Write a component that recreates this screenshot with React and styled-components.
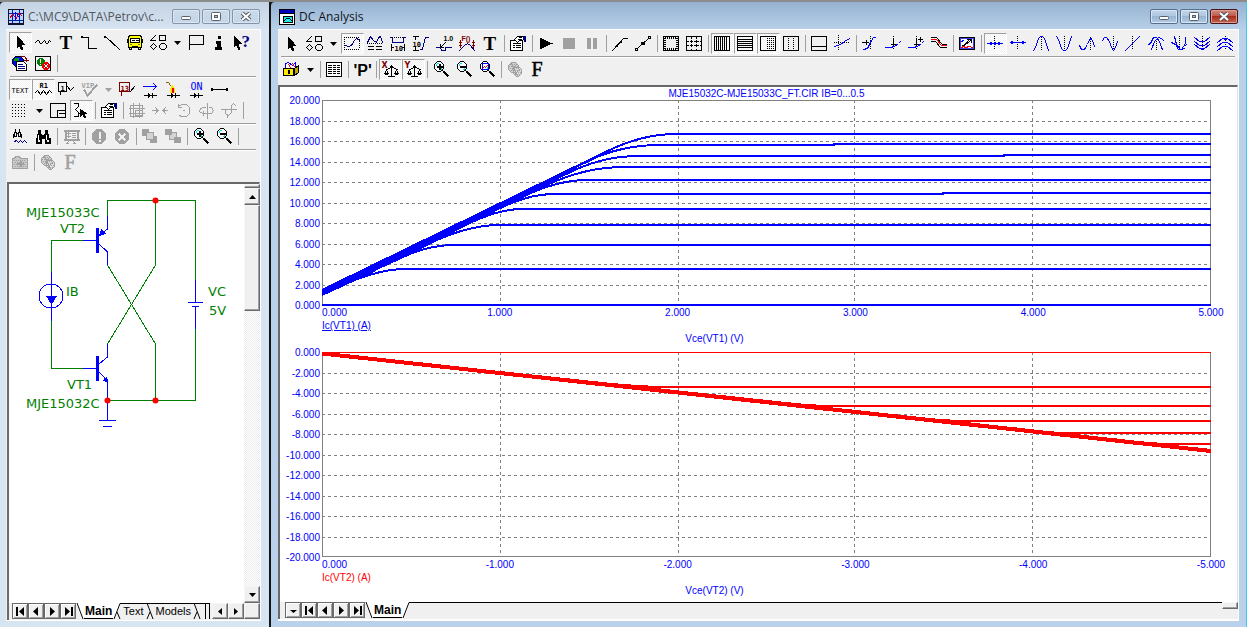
import React from "react"
import styled, { createGlobalStyle, css } from "styled-components"

const GlobalStyle = createGlobalStyle`
  * { box-sizing: border-box; }
  body {
    margin: 0;
    font-family: "Liberation Sans", Arial, sans-serif;
    background: #000;
  }
  button { font: inherit; padding: 0; margin: 0; }
`;

const Desktop = styled.div`
  display: grid;
  grid-template-columns: 269px 1fr;
  gap: 2px;
  min-height: 100vh;
  padding-top: 2px;
  background: linear-gradient(#8c8c8c 2px, #151515 2px);
`;

const Frame = styled.section`
  display: flex;
  flex-direction: column;
  min-width: 0;
  padding: ${p => (p.$active ? "0 7px 6px 7px" : "0 8px 6px 6px")};
  border-top-left-radius: 4px;
  background: ${p => (p.$active
    ? "linear-gradient(#96b2d0, #b9d1ea 28px)"
    : "linear-gradient(#c4d3e3, #d7e4f2 28px)")};
  border-right: ${p => (p.$active ? "1px solid #35cdf0" : "0")};
`;

const TitleBar = styled.header`
  display: flex;
  align-items: center;
  height: 27px;
  padding: 2px 1px 0 ${p => (p.$active ? "1px" : "2px")};
  gap: 4px;
`;

const Title = styled.h1`
  flex: 1;
  min-width: 0;
  margin: 0;
  font: 400 12px/16px "Open Sans", "Noto Sans", sans-serif;
  color: ${p => (p.$active ? "#10151c" : "#505863")};
  white-space: nowrap;
`;

const WinButtons = styled.div`
  display: flex;
  gap: 2px;
`;

const WinButton = styled.button`
  display: grid;
  place-items: center;
  width: 28px;
  height: 15px;
  border: 1px solid ${p => (p.$close ? "#43141c" : p.$active ? "#57708f" : "#8493a8")};
  border-radius: 2px;
  box-shadow: inset 0 0 0 1px ${p => (p.$close ? "#dc9c90" : "#d9e6f4")};
  background: ${p => (p.$close
    ? "linear-gradient(#d08a80, #c35443 50%, #a92e1c 50%, #c8644a)"
    : p.$active
      ? "linear-gradient(#c3d6ea, #adc5df 50%, #98b4d2 50%, #b4cbe4)"
      : "linear-gradient(#cbd9e8, #c6d6e6)")};
`;

const Client = styled.div`
  flex: 1;
  display: flex;
  flex-direction: column;
  min-width: 0;
  border: 1px solid #fff;
  border-left: 0;
  border-bottom-width: ${p => (p.$wide ? "2px" : "1px")};
  background: #f0f0f0;
`;

const Toolbar = styled.div`
  padding: ${p => (p.$wide ? "3px 2px 5px 2px" : "2px 3px 9px 3px")};
`;

const ToolRow = styled.div`
  display: flex;
  height: 21px;
`;

const Rule = styled.hr`
  height: 1px;
  margin: 2px 1px;
  border: 0;
  background: #9d9d9d;
  box-shadow: 0 1px #fff;
`;

const Sep = styled.span`
  flex: none;
  width: 1px;
  height: 17px;
  margin: 2px 2px;
  background: #a0a0a0;
`;

const Tool = styled.button`
  flex: none;
  display: grid;
  place-items: center;
  width: 23px;
  height: 21px;
  border: 1px solid transparent;
  background: none;
  ${p => p.$on && css`
    border-color: #a0a0a0 #fff #fff #a0a0a0;
    background: conic-gradient(#fff 25%, #f0f0f0 0 50%, #fff 0 75%, #f0f0f0 0) 0 0 / 2px 2px;
  `}
`;

const DropTool = styled(Tool)`
  width: 15px;
`;

// ---- icon primitives: every integer coordinate is the centre of one pixel ----

const Glyph = styled.svg`
  display: block;
  width: 17px;
  height: 17px;
  overflow: visible;
  shape-rendering: crispEdges;
`;

const L = styled.path`
  fill: none;
  stroke: ${p => p.$c || "#000"};
  stroke-width: ${p => p.$w || 1};
  stroke-linecap: square;
`;
const A = styled(L)`
  fill: ${p => p.$f || p.$c || "#000"};
`;
const Dot = styled(L)`
  stroke-dasharray: 0 ${p => p.$step || 2};
`;
const Tx = styled.text`
  fill: ${p => p.$c || "#000"};
  font: ${p => p.$font || 'bold 7px "DejaVu Sans Mono"'}, monospace;
`;

const BLUE = "#0000ff";
const NAVY = "#000080";
const MAROON = "#800000";
const GRAY = "#a0a0a0";
const SERIF = '"Liberation Serif"';

const Lens = ({ children }) => (
  <>
    <A d="M4 0h3l3 3v4l-3 3h-3l-3-3v-4z" $f="#fff" />
    <L d="M2 2l1-1M8 1l1 1M2 8l1 1M8 9l1-1" />
    <L d="M3 3v1M4 2h1M7 8h1M8 7v-1" $c="#00e0e8" />
    <L d="M9 9l5 5" />
    <L d="M11 10l4 4M10 11l4 4" />
    {children}
  </>
);

const Shapes = () => (
  <>
    <L d="M0 6l5-5M1 6h4M9 1h6v5h-6z" />
    <L d="M3 9l3 3-3 3-3-3zM11 9h3l2 2v2l-2 2h-3l-2-2v-2z" />
  </>
);

const Props = () => (
  <>
    <A d="M0 5h12v10h-12z" $f="#fff" />
    <L d="M3 8h7M3 10h1M6 10h4M3 12h1M6 12h4" />
    <A d="M4 4l3-3h5l2 1-2 3h-3l-2 2z" $f="#fff" />
    <L d="M8 4h3M9 2h2" />
    <A d="M13 1h2v5h-1z" $c={NAVY} />
  </>
);

const Globe = ({ c = GRAY }) => (
  <>
    <A d="M4 1h4l3 3v4l-3 3h-4l-3-3v-4z" $c={c} $f="#d0d0d0" />
    <A d="M8 6h4l2 2v4l-3 3h-2l-3-3v-4z" $c={c} $f="#dcdcdc" />
    <Dot d="M3 3h6M2 5h10M3 7h12M4 9h10M7 11h8M8 13h5" $c={c} />
    <L d="M4 2l6 12M9 3l-5 6M13 7l-6 6" $c={c} />
  </>
);

const Binocs = () => (
  <>
    <A d="M3 2h2v3h-2zM10 2h2v3h-2zM2 6h4v3h-4zM9 6h4v3h-4z" />
    <L d="M1 10h4v4h-4zM10 10h4v4h-4zM6 7h3M6 9h3" $w={2} />
    <L d="M3 7v4M11 7v4" $c="#fff" />
  </>
);

const Scales = ({ letter }) => (
  <>
    <Tx x="-1" y="6" $c={MAROON} $font={'bold 8px "DejaVu Sans"'}>{letter}</Tx>
    <L d="M9 4v10M8 6h3M6 7h1M12 7h1M4 8h1M14 8h1M6 15h6" />
    <L d="M8 5h2M4 9l-2 3M4 9l2 3M14 9l-2 3M14 9l2 3" />
    <L d="M2 12h4M3 13h2M12 12h4M13 13h2" />
  </>
);

const Diode = () => <L d="M2 14h12M6 12v4M7 13v2M10 12v4M8 14h2" />;

const icons = {
  arrow: <A d="M5 2v11l2-2 2 4h1l-1-5h3z" />,
  resistor: <L d="M0 8l2-2h1l2 3h1l3-3 2 3h1l2-3 1 1" />,
  text: <Tx x="1" y="14" $font={`bold 19px ${SERIF}`}>T</Tx>,
  wire: <><A d="M0 2h1v1h-1z" /><L d="M1 3h6v11h8" /></>,
  line: <><A d="M0 2h1v1h-1z" /><L d="M1 2l14 13" /></>,
  bus: (
    <>
      <A d="M2 1h11l1 2v10h-13v-10z" $f="#ffff00" />
      <A d="M3 4h9v4h-9z" $f="#fff" />
      <L d="M0 5v3M15 5v3M5 6h2M9 6h2M2 13v2h2v-2M11 13v2h2v-2M5 12h5" />
      <L d="M3 10h1M11 10h1" $c="#808000" />
    </>
  ),
  shapes: <Shapes />,
  flag: <L d="M1 1h14v9h-14zM1 1v14" />,
  info: <><A d="M7 2h2v2h-2z" /><A d="M5 7h4v6h1v2h-6v-2h2v-4h-1z" /></>,
  help: (
    <>
      <A d="M0 2v10l2-2 2 5h1l-1-6h3z" />
      <Tx x="7" y="12" $c={NAVY} $font={`bold 17px ${SERIF}`}>?</Tx>
    </>
  ),
  webpage: (
    <>
      <A d="M3 1h5l3 3v4l-3 3h-5l-3-3v-4z" $f={BLUE} />
      <L d="M3 3h2M2 4h3M6 6h3" $c="#00a000" $w={2} />
      <L d="M9 1h3l2 3M12 5h4M14 6v-3" $c={MAROON} />
      <A d="M4 6h7l3 3v6h-10z" $f="#fff" />
      <L d="M6 9h4M6 11h6M6 13h6" $c={NAVY} />
    </>
  ),
  status: (
    <>
      <A d="M0 1h15v14h-15z" $f="#f4f4f4" />
      <A d="M4 3h3l2 2v3l-2 2h-3l-2-2v-3z" $c="#008000" />
      <L d="M5 4v3M5 9v0" $c="#fff" />
      <A d="M9 7h3l2 2v3l-2 2h-3l-2-2v-3z" $c="#ee0000" />
      <L d="M9 9l3 3M12 9l-3 3" $c="#fff" />
    </>
  ),
  textLabel: <Tx x="-1" y="11" $font={'7px "DejaVu Sans Mono"'}>TEXT</Tx>,
  r1: <><Tx x="4" y="6">R1</Tx><L d="M0 11l2-2 3 4 3-4 3 4 3-4 2 2" /></>,
  node1: <><L d="M0 1h8v9h-8zM2 10v3" /><Tx x="2" y="9">1</Tx><L d="M9 5l3 4 3-3" /></>,
  vip: <><Tx x="0" y="6" $c={GRAY}>VIP</Tx><L d="M3 9l3 5 9-10" $c={GRAY} $w={2} /></>,
  node13: <><L d="M0 1h10v9h-10zM2 10v4" $c={MAROON} /><Tx x="1" y="9" $c={MAROON}>13</Tx><L d="M11 10l4-5" /></>,
  current: <><L d="M1 5h13M11 2l3 3-3 3" $c={BLUE} /><Diode /></>,
  power: (
    <>
      <L d="M1 1l2 0 2 3" $c="#806000" />
      <A d="M7 4l2 3v4h-4v-4z" $c="#ffe800" />
      <L d="M7 7v3" $c="#f00000" $w={2} />
      <Diode />
    </>
  ),
  on: <><Tx x="2" y="8" $c={BLUE} $font={'10px "DejaVu Sans Mono"'}>ON</Tx><Diode /></>,
  pins: <><L d="M1 8h14" /><A d="M0 7h1v2h-1zM15 7h1v2h-1z" /></>,
  grid: <Dot $step={3} d="M0 2h15M0 5h15M0 8h15M0 11h15M0 14h15" />,
  panel: <L d="M0 1h15v14h-15zM7 8h8M7 8v7M9 11h6" />,
  rubber: <><L d="M1 1h4v3l-3 3 4 4M1 14h4v-3" /><A d="M7 7v7l2-2 2 3h1l-1-4h2z" /></>,
  props: <Props />,
  group: (
    <L d="M1 3h12v11h-12zM4 1v14M10 1v14M0 6h15M0 11h15M6 8h7v5h-7z" $c={GRAY} />
  ),
  flipX: <L d="M0 8h6M3 5l3 3-3 3M15 8h-5M13 5l-3 3 3 3M4 6v4M12 6v4" $c={GRAY} />,
  rotate: <L d="M3 4l3-2h5l3 3v6l-3 3h-5l-2-1M3 2v3h3M8 8h1" $c={GRAY} />,
  flipY: <L d="M9 1v15M11 5h2l2 3-2 3h-9l-3-2 1-3 3-1h2M5 9v4" $c={GRAY} />,
  flipZ: <L d="M0 7h15M4 7v4l3 2 3-3v-7l2-2 2 2M6 12v3" $c={GRAY} />,
  findSmall: (
    <>
      <L d="M3 1v2M7 1v2M2 4h2v4h-2zM6 4h2v4h-2zM1 6v3M9 6v3M4 5h2" />
      <L d="M2 13l2-1 2 2 2-2 2 2 2-2 2 2" $c={NAVY} />
    </>
  ),
  find: <Binocs />,
  board: (
    <>
      <L d="M1 2h14M1 11h14M2 2v9M14 2v9" $c={GRAY} $w={2} />
      <L d="M6 12l-3 3h2M9 12l3 3h-2M4 5h3M4 8h3M5 4v5M9 5h3M9 7h3M9 9h3" $c={GRAY} />
    </>
  ),
  stopSign: (
    <>
      <A d="M5 1h5l4 4v6l-4 4h-5l-4-4v-6z" $c={GRAY} />
      <L d="M8 4v5M8 12v0" $c="#f0f0f0" $w={2} />
    </>
  ),
  cancel: (
    <>
      <A d="M5 1h5l4 4v6l-4 4h-5l-4-4v-6z" $c={GRAY} />
      <L d="M5 6l5 5M10 6l-5 5" $c="#f0f0f0" $w={2} />
    </>
  ),
  front: <><A d="M0 1h6v6h-6zM8 8h6v6h-6z" $c={GRAY} /><A d="M4 4h7v7h-7z" $c={GRAY} $f="#d4d4d4" /></>,
  back: <><A d="M4 4h7v7h-7z" $c={GRAY} $f="#d4d4d4" /><A d="M0 1h6v5h-6zM9 9h6v5h-6z" $c={GRAY} /></>,
  zoomIn: <Lens><L d="M4 5h4M6 3v4" $w={2} /></Lens>,
  zoomOut: <Lens><L d="M4 5h4" $w={2} /></Lens>,
  folder: (
    <>
      <A d="M0 4h2l1-2h4l1 2h7v10h-15z" $c={GRAY} $f="#c8c8c8" />
      <Dot d="M2 6h12M3 8h12M2 10h12M3 12h12" $c={GRAY} />
      <L d="M5 9h5M8 7v4" $c={GRAY} $w={2} />
    </>
  ),
  globe: <Globe />,
  fontGray: <Tx x="1" y="14" $c={GRAY} $font={`20px ${SERIF}`} stroke={GRAY} strokeWidth="0.5">F</Tx>,
  font: <Tx x="1" y="14" $font={`20px ${SERIF}`} stroke="#000" strokeWidth="0.5">F</Tx>,

  scaleMode: (
    <><Dot d="M0 2h15M0 14h15M0 4v10M15 4v10" /><L d="M1 10l3 1 3-1 3-5 2-2 2 1 1 1" $c={NAVY} /></>
  ),
  cursorMode: (
    <><L d="M0 7l3-6 3 4 3 2 2-5 2-1 2 6" $c={NAVY} /><L d="M1 11h5M9 11h5M1 14h5M9 14h5" /><Dot d="M0 8h16" /></>
  ),
  hTag: (
    <><L d="M0 2h2v5h11v-5h2" $c={NAVY} /><L d="M1 9v6M14 9v6M2 12h1M12 12h1" /><Dot d="M2 2h12" /><Tx x="4" y="15">10</Tx></>
  ),
  vTag: (
    <><L d="M7 14h2l3-12h3" $c={NAVY} /><L d="M0 1h5M0 15h5M2 2v2M2 12v2" /><Tx x="-1" y="11">10</Tx></>
  ),
  tag: (
    <><Tx x="7" y="5" $font={'bold 7px "Liberation Sans"'}>1.0</Tx><L d="M4 12l5-5M4 9v3h3" /><L d="M0 12h4l1 3h4v-3h6" $c={NAVY} /></>
  ),
  fnTag: (
    <><Tx x="2" y="5" $c={MAROON} $font={'bold 7px "Liberation Sans"'}>F()</Tx><L d="M1 5v7M0 7h2M0 10h2M14 5v7M13 7h2M13 10h2" $c={MAROON} /><L d="M0 15l5-5 3-2 3 2 4 5" $c={NAVY} /></>
  ),
  run: <A d="M2 3v10l11-5z" />,
  stop: <A d="M2 3h11v10h-11z" $c={GRAY} />,
  pause: <A d="M3 3h3v10h-3zM9 3h3v10h-3z" $c={GRAY} />,
  points: <><L d="M0 15l11-12h4" /><A d="M8 6h1v1h-1zM4 10h1v1h-1z" /></>,
  tokens: <><L d="M0 13h2v2h-2zM3 12l10-9M13 1h2v2h-2zM6 7h3v2h-3z" /></>,
  ruler: (
    <>
      <L d="M0 1h15v14h-15z" />
      <Dot d="M2 2h12M2 3h12M2 13h12M2 14h12M1 3v12M2 3v12M13 3v12M14 3v12" />
    </>
  ),
  plusGrid: (
    <>
      <L d="M0 1h15v14h-15zM5 1v1M10 1v1M5 14v1M10 14v1M0 6h1M0 10h1M14 6h1M14 10h1" />
      <L d="M4 6h2M9 6h2M4 10h2M9 10h2M5 5v2M10 5v2M5 9v2M10 9v2" />
      <Dot d="M2 6h12M2 10h12M5 3v10M10 3v10" />
    </>
  ),
  vLines: <L d="M0 1h15v14h-15zM2 1v14M4 1v14M6 1v14M8 1v14M10 1v14M12 1v14" />,
  hLines: <L d="M0 1h15v14h-15zM0 4h15M0 6h15M0 8h15M0 10h15M0 12h15" />,
  minorV: <><L d="M0 1h15v14h-15z" /><Dot d="M7 3v12M9 3v12M11 3v12M13 3v12" /></>,
  minorH: <><L d="M0 1h15v14h-15z" /><Dot d="M5 3v12M10 3v12" /></>,
  baseline: <L d="M0 1h15v14h-15zM0 11h15" />,
  tracker: <><Dot d="M4 0v15M0 7h16" /><L d="M0 11l6-2 4-3 5-3" $c={BLUE} /></>,
  toX: <><Dot d="M8 1v14" /><L d="M0 7h6M4 5v4" /><L d="M1 14l4-1 3-6 3-5h2" $c={BLUE} /></>,
  toY: <><Dot d="M8 1v14" /><L d="M8 4v7M6 9h4" /><L d="M0 12h5l4-1 4-3 2-2" $c={BLUE} /></>,
  toPerf: <><Dot d="M8 1v14" /><L d="M8 4v7M6 9h4M10 4h4M12 2v4" /><L d="M0 12h5l4-1 4-3 2-2" $c={BLUE} /></>,
  branch: <><L d="M0 2h5l5 6 1 1h4M0 6h4l5 6h6" /><L d="M0 4h5l5 6h5" $c="#ff0000" /></>,
  animate: (
    <>
      <A d="M0 2h15v12h-15z" $f="#fff" />
      <L d="M1 3h13v10h-13z" $c="#4040ff" />
      <L d="M2 12l2-1 2 1 4-1 3 1" $c="#ff0000" />
      <L d="M3 10h2l6-5M4 10l6-6M8 4h4v3" />
      <L d="M2 6l2-1" $c={BLUE} />
    </>
  ),
  nextPt: <><Dot d="M7 1v14" /><L d="M0 8h15" $c={BLUE} /><A d="M3 7h1v2h-1zM7 7h1v2h-1zM11 7h1v2h-1z" $c={BLUE} /></>,
  nextInt: <><Dot d="M7 1v14" /><L d="M0 7h15" $c={BLUE} /><A d="M1 6h1v2h-1zM12 6h1v2h-1z" $c={BLUE} /></>,
  peak: <><Dot d="M8 2v13" /><L d="M0 15l2-3 3-9 2-2h2l2 2 3 9 1 3" $c={BLUE} /></>,
  valley: <><Dot d="M8 1v13" /><L d="M0 1l2 3 3 9 2 2h2l2-2 3-9 1-3" $c={BLUE} /></>,
  high: <><Dot d="M11 2v13" /><L d="M0 10l2 4h3l3-5 2-5 2-1 2 5 1 3" $c={BLUE} /></>,
  low: <><Dot d="M11 1v13" /><L d="M0 5l2-3 2 0 3 4 2 6 2 3 2-3 2-6" $c={BLUE} /></>,
  inflect: <><Dot d="M7 1v14" /><L d="M0 15l14-14" $c={BLUE} /></>,
  gHigh: <><Dot d="M8 2v13" /><L d="M0 9l2-1 3-6h3l3 4 2 6 1 2M3 14l3-8 4-4 3 1 2 2" $c={BLUE} /></>,
  gLow: <><Dot d="M8 1v13" /><L d="M0 7l4 2 3 5h3l4-6 0-6M3 1l2 8 4 5 4-1M15 9l-3 2" $c={BLUE} /></>,
  bottoms: <><Dot d="M8 1v14" /><L d="M0 2l5 4h5l5-4M0 6l5 4h5l5-4M0 9l5 4h5l5-4" $c={BLUE} /><A d="M7 13h2v1h-2z" $c={BLUE} /></>,
  tops: <><Dot d="M8 1v14" /><L d="M0 7l5-4h5l5 4M0 11l5-4h5l5 4M0 15l5-4h5l5 4" $c={BLUE} /><A d="M7 3h2v1h-2z" $c={BLUE} /></>,
  chest: (
    <>
      <A d="M2 2l3-1 4 3 3-3v6h-10z" $c={BLUE} $f="#fff" />
      <L d="M5 3l2 3M9 2l2 3" $c="#ff0000" />
      <A d="M0 7h10v7h-10z" $f="#ffe800" />
      <A d="M11 7l4-3v7l-4 3z" $f="#c0a800" />
      <L d="M5 9v2" $w={2} />
    </>
  ),
  table: <><A d="M0 1h15v14h-15z" $f="#fff" /><L d="M2 4h3M7 4h2M11 4h2M2 6h3M7 6h2M11 6h2M2 8h3M7 8h2M11 8h2M2 10h3M7 10h2M11 10h2M2 12h3M7 12h2M11 12h2" /></>,
  watchP: <Tx x="-1" y="14" $font={'bold 16px "Liberation Sans"'}>'P'</Tx>,
  scaleX: <Scales letter="X" />,
  scaleY: <Scales letter="Y" />,
  zoomFit: <Lens><L d="M3 2h6v6h-6z" $c={BLUE} /><L d="M4 6l1-1 1 1 2-2" $c="#ff0000" /></Lens>,
};

// "|" is a separator, "v" a drop-down arrow, a leading "*" a pressed button
const ToolStrip = ({ items }) => (
  <ToolRow role="toolbar">
    {items.split(" ").map((item, i) => {
      if (item === "|") return <Sep key={i} />;
      if (item === "v" || item === "vg") {
        return (
          <DropTool key={i} type="button" aria-label="More options">
            <svg width="7" height="4"><path d="M0 0h7l-3.500 4z" fill={item === "v" ? "#000" : GRAY} /></svg>
          </DropTool>
        );
      }
      const on = item[0] === "*";
      const name = on ? item.slice(1) : item;
      return (
        <Tool key={i} type="button" $on={on} aria-pressed={on} aria-label={name}>
          <Glyph viewBox="-0.5 -0.5 17 17">{icons[name]}</Glyph>
        </Tool>
      );
    })}
  </ToolRow>
);

const WindowControls = ({ active }) => (
  <WinButtons>
    <WinButton type="button" aria-label="Minimize" $active={active}>
      <svg width="12" height="9"><rect x="1.500" y="4.500" width="9" height="3" rx="1" fill="#fff" stroke="#565f6d" /></svg>
    </WinButton>
    <WinButton type="button" aria-label="Maximize" $active={active}>
      <svg width="12" height="9"><rect x="1.500" y="0.500" width="9" height="8" rx="1" fill="#fff" stroke="#565f6d" /><rect x="4.500" y="3.500" width="3" height="2" fill="#a9c0d8" stroke="#565f6d" /></svg>
    </WinButton>
    <WinButton type="button" aria-label="Close" $active={active} $close={active}>
      <svg width="12" height="9">
        <path d="M2 1l8 7M10 1l-8 7" stroke="#4f5866" strokeWidth="4" />
        <path d="M2 1l8 7M10 1l-8 7" stroke="#fff" strokeWidth="2" />
      </svg>
    </WinButton>
  </WinButtons>
);

// ---- schematic ----

const Workspace = styled.div`
  flex: 1;
  display: grid;
  grid-template-columns: 1fr 16px;
  border-top: 2px solid #696969;
  border-left: 2px solid #696969;
  border-right: 1px solid #e3e3e3;
  margin-left: 1px;
  background: #fff;
`;

const Drawing = styled.svg`
  display: block;
  shape-rendering: crispEdges;
  font: 13px "DejaVu Sans", Verdana, sans-serif;
`;

const Wire = styled.path`
  fill: none;
  stroke: ${p => (p.$part ? BLUE : "#008000")};
  stroke-width: ${p => p.$w || 1};
`;

const Joint = styled.circle`
  fill: #f00;
  shape-rendering: auto;
`;

const parts = [
  { x: 26, y: 217, text: "MJE15033C" },
  { x: 60, y: 233, text: "VT2" },
  { x: 66, y: 296, text: "IB" },
  { x: 208, y: 296, text: "VC" },
  { x: 209, y: 315, text: "5V" },
  { x: 67, y: 389, text: "VT1" },
  { x: 26, y: 408, text: "MJE15032C" },
];

const joints = [[155.5, 200.5], [107.5, 400.5], [155.5, 400.5]];

const Schematic = () => (
  <Drawing width="235" height="250" viewBox="9 184 235 250" role="img" aria-label="Schematic">
    <Wire d="M107.500 216V200.500H195.500V281M155.500 200V265L107.500 344" />
    <Wire d="M107.500 265L155.500 344V400M195.500 329V400.500H107.500V393M83 240.500H51.500V272M51.500 321V368.500H83" />
    <Wire $part d="M107.500 216V229L99 236M83 240.500H97M99 244L107.500 252V265" />
    <Wire $part d="M107.500 344V357L99 364M83 368.500H97M99 372L107.500 381V414M51.500 272V321" />
    <Wire $part $w="3" d="M97.500 228V253M97.500 356V381" />
    <Wire $part d="M99 420.500H116M103 426.500H112M107.500 414V420M195.500 280V302M188 302.500H203M192 306.500H199M195.500 307V329" />
    <circle cx="51" cy="296" r="12" fill="none" stroke={BLUE} />
    <path d="M46 296h11l-5.500 9zM99 236l2-7 5 5zM108 382l-1-6-5 5z" fill={BLUE} />
    {joints.map(([x, y]) => <Joint key={x + "-" + y} cx={x} cy={y} r="3" />)}
    {parts.map(p => <text key={p.text} x={p.x} y={p.y} fill="#008000">{p.text}</text>)}
  </Drawing>
);

const ScrollBar = styled.div`
  display: flex;
  flex-direction: column;
  background: conic-gradient(#fff 25%, #ececec 0 50%, #fff 0 75%, #ececec 0) 0 0 / 2px 2px;
`;

const raised = css`
  border: 1px solid;
  border-color: #f6f6f6 #696969 #696969 #f6f6f6;
  box-shadow: inset -1px -1px #a0a0a0;
  background: #f0f0f0;
`;

const SplitBox = styled.div`
  height: 4px;
  ${raised}
`;
const ScrollButton = styled.button`
  display: grid;
  place-items: center;
  height: 17px;
  ${raised}
`;
const Thumb = styled.div`
  height: 106px;
  ${raised}
`;
const Fill = styled.div`
  flex: 1;
`;

// ---- sheet tabs ----

const TabBar = styled.nav`
  display: flex;
  height: 17px;
  padding-left: ${p => (p.$wide ? "5px" : "3px")};
  border-left: 2px solid #696969;
  margin-left: ${p => (p.$wide ? "0" : "1px")};
`;

const NavButton = styled.button`
  display: grid;
  place-items: center;
  flex: none;
  width: 16px;
  height: 16px;
  border: 1px solid #696969;
  box-shadow: inset 1px 1px #fff, inset -1px -1px #a0a0a0;
  background: #f0f0f0;
`;

const Tab = styled.button`
  flex: none;
  height: 16px;
  padding: 0 ${p => (p.$current ? 1 : 2)}px;
  border: 0;
  border-top: 1px solid ${p => (p.$current ? "#fff" : "#000")};
  border-bottom: 1px solid ${p => (p.$current ? "#000" : "transparent")};
  background: ${p => (p.$current ? "#fff" : "#f0f0f0")};
  font-size: ${p => (p.$current ? 12 : 11)}px;
  font-weight: ${p => (p.$current ? 700 : 400)};
  line-height: 14px;
`;

const Slant = styled.svg`
  flex: none;
  width: 8px;
  height: 16px;
`;

const TabLine = styled.div`
  flex: 1;
  height: 16px;
  border-top: 1px solid #000;
`;

const TabEnd = styled.span`
  width: 5px;
  height: 16px;
  margin-right: 2px;
  border: 1px solid #000;
  border-bottom: 0;
`;

const navArrows = {
  first: "M1 0h2v9h-2zM9 0v9l-5-4.500z",
  prev: "M7 0v9l-5-4.500z",
  next: "M3 0v9l5-4.500z",
  last: "M8 0h2v9h-2zM2 0v9l5-4.500z",
  list: "M2 4h7l-3.500 3z",
};

const NavArrow = ({ kind }) => (
  <NavButton type="button" aria-label={kind + " sheet"}>
    <svg width="11" height="9"><path d={navArrows[kind]} /></svg>
  </NavButton>
);

const Gripper = styled.div`
  width: 16px;
  height: 7px;
  ${raised}
`;

const HScroll = styled.button`
  display: grid;
  place-items: center;
  flex: none;
  width: 16px;
  height: 16px;
  ${raised}
`;

const SchematicTabs = () => (
  <TabBar>
    {["first", "prev", "next", "last"].map(k => <NavArrow key={k} kind={k} />)}
    <Slant><path d="M0 0h8v16h-2z" fill="#fff" /><path d="M1 0l6 16" stroke="#000" fill="none" /></Slant>
    <Tab type="button" $current>Main</Tab>
    <Slant><path d="M0 0h8l-6 16h-2z" fill="#fff" /><path d="M8 .5h-1L1 16M4 9l3 7" stroke="#000" fill="none" /></Slant>
    <Tab type="button">Text</Tab>
    <Slant><path d="M0 .5h8M1 0l6 16M4 9L1 16" stroke="#000" fill="none" /></Slant>
    <Tab type="button">Models</Tab>
    <Slant><path d="M0 .5h8M1 0l6 16M4 9L1 16" stroke="#000" fill="none" /></Slant>
    <TabLine />
    <TabEnd />
    <HScroll type="button" aria-label="Scroll left"><svg width="4" height="7"><path d="M4 0v7l-4-3.500z" /></svg></HScroll>
    <HScroll type="button" aria-label="Scroll right"><svg width="4" height="7"><path d="M0 0v7l4-3.500z" /></svg></HScroll>
    <HScroll as="span" />
  </TabBar>
);

const SchematicWindow = () => (
  <Frame>
    <TitleBar>
      <svg width="16" height="16" shapeRendering="crispEdges">
        <rect width="16" height="16" fill="#101030" />
        <rect x="1" y="1" width="14" height="13" fill="#b8d4ff" />
        <path d="M1 4.500h14M1 11.500h14M4.500 1v13M11.500 1v13" stroke="#0020a0" />
        <path d="M2 9l3-4 3 5 3-6 3 3" stroke="#d00020" fill="none" />
        <path d="M7 3v9M9 5l3 5" stroke={BLUE} fill="none" />
      </svg>
      <Title>C:\MC9\DATA\Petrov\c...</Title>
      <WindowControls />
    </TitleBar>
    <Client>
      <Toolbar>
        <ToolStrip items="*arrow resistor text wire line bus shapes v flag info help" />
        <ToolStrip items="webpage status |" />
        <Rule />
        <ToolStrip items="*textLabel *r1 node1 vip vg node13 current power on pins" />
        <ToolStrip items="grid v panel *rubber | props | group flipX rotate flipY flipZ |" />
        <Rule />
        <ToolStrip items="findSmall find | board | stopSign cancel | front back | zoomIn zoomOut |" />
        <Rule />
        <ToolStrip items="folder | globe fontGray" />
      </Toolbar>
      <Workspace>
        <Schematic />
        <ScrollBar>
          <SplitBox />
          <ScrollButton type="button" aria-label="Scroll up"><svg width="7" height="4"><path d="M0 4h7L3.500 0z" /></svg></ScrollButton>
          <Thumb />
          <Fill />
          <ScrollButton type="button" aria-label="Scroll down"><svg width="7" height="4"><path d="M0 0h7L3.500 4z" /></svg></ScrollButton>
        </ScrollBar>
      </Workspace>
      <SchematicTabs />
    </Client>
  </Frame>
);

// ---- charts ----

const ChartArea = styled.main`
  flex: 1;
  display: grid;
  grid-template-columns: 42px 1fr 26px;
  grid-template-rows: 13px 1fr 47px 1fr 45px;
  border-top: 2px solid #696969;
  border-left: 2px solid #696969;
  border-right: 1px solid #e3e3e3;
  background: #fff;
  color: ${BLUE};
  font-size: 10px;
  line-height: 13px;
  white-space: nowrap;
`;

const ChartTitle = styled.div`
  grid-column: 2;
  text-align: center;
`;

const YAxis = styled.div`
  grid-column: 1;
  display: flex;
  flex-direction: column;
  justify-content: space-between;
  margin: -6px 2px -7px 0;
  text-align: right;
`;

const Plot = styled.svg`
  grid-column: 2;
  display: block;
  width: 100%;
  height: 100%;
  min-height: 0;
  overflow: visible;
  shape-rendering: crispEdges;
  path {
    fill: none;
    vector-effect: non-scaling-stroke;
  }
`;

const XAxis = styled.div`
  grid-column: 2;
`;

const Ticks = styled.div`
  display: flex;
  justify-content: space-between;
  padding-top: 1px;
  span {
    display: flex;
    justify-content: center;
    width: 0;
  }
  span:first-child {
    justify-content: flex-start;
  }
`;

const Trace = styled.div`
  color: ${p => p.$c};
  text-decoration: ${p => (p.$selected ? "underline" : "none")};
`;

const AxisName = styled.div`
  margin-right: 104px;
  text-align: center;
`;

const W = 890;
const H = 205;
const tickText = (n, sign) => (n && sign < 0 ? "-" : "") + n.toFixed(3);
const yTop = [20, 18, 16, 14, 12, 10, 8, 6, 4, 2, 0];
const yBottom = [...yTop].reverse();
const xs = [0, 1, 2, 3, 4, 5];

const gridPath =
  [1, 2, 3, 4, 5, 6, 7, 8, 9].map(i => `M0 ${Math.round(i * 20.5) + 0.5}H${W}`).join("") +
  [1, 2, 3, 4].map(i => `M${Math.round(i * 177.8) + 0.5} 0V${H}`).join("");

// start level, where the knee begins, its control point, where it ends, plateau
const risers = [
  [195, 0, 195, 50, 83, 169],
  [195, 48, 173, 96, 131, 145],
  [194, 90, 153, 138, 178, 125],
  [194, 125, 135, 170, 200, 109],
  [193, 165, 115, 202, 232, 94],
  [193, 195, 100, 232, 266, 80],
  [192, 225, 85, 264, 302, 67],
  [191, 255, 69, 285, 315, 56],
  [190, 275, 57, 305, 335, 45],
  [190, 288, 50, 322, 354, 34],
];
const drift = { 94: 622, 56: 683, 45: 513 };

const riserPath = ([y0, bx, by, cx, ex, p]) =>
  `M0 ${y0}L${bx} ${by}Q${cx} ${p} ${ex} ${p}` +
  (drift[p] ? `H${drift[p]}V${p - 1}H${W}` : `H${W}`);

// knee start, knee corner, knee end, plateau
const fallers = [
  [290, 325, 345, 35],
  [455, 490, 510, 54],
  [590, 622, 645, 69],
  [700, 728, 745, 81],
  [800, 830, 852, 92],
];

const fallerPath = ([bx, cx, ex, p]) =>
  `M0 1L${bx} ${Math.round(bx * 0.11)}Q${cx} ${p} ${ex} ${p}H${W}`;

const Charts = () => (
  <ChartArea>
    <ChartTitle>MJE15032C-MJE15033C_FT.CIR IB=0...0.5</ChartTitle>
    <YAxis>{yTop.map(n => <span key={n}>{tickText(n, 1)}</span>)}</YAxis>
    <Plot viewBox={`0 0 ${W} ${H}`} preserveAspectRatio="none" role="img" aria-label="Ic(VT1)">
      <path d={gridPath} stroke="#808080" strokeDasharray="3 3" />
      <path d={`M.5 ${H}V.5H${W - 0.5}V${H}`} stroke="#808080" />
      {risers.map(r => <path key={r[5]} d={riserPath(r)} stroke={BLUE} strokeWidth="2" />)}
      <path d={`M0 ${H}H${W}`} stroke={BLUE} strokeWidth="2" />
    </Plot>
    <XAxis>
      <Ticks>{xs.map(n => <span key={n}>{tickText(n, 1)}</span>)}</Ticks>
      <Trace $c={BLUE} $selected>Ic(VT1) (A)</Trace>
      <AxisName>Vce(VT1) (V)</AxisName>
    </XAxis>
    <YAxis>{yBottom.map(n => <span key={n}>{tickText(n, -1)}</span>)}</YAxis>
    <Plot viewBox={`0 0 ${W} ${H}`} preserveAspectRatio="none" role="img" aria-label="Ic(VT2)">
      <path d={gridPath} stroke="#808080" strokeDasharray="3 3" />
      <path d={`M.5 .5V${H - 0.5}H${W - 0.5}V.5`} stroke="#808080" />
      {fallers.map(f => <path key={f[3]} d={fallerPath(f)} stroke="#f00" strokeWidth="2" />)}
      <path d={`M0 1.500L${W} 99`} stroke="#f00" strokeWidth="4" />
      <path d={`M0 .5H${W}`} stroke="#f00" />
    </Plot>
    <XAxis>
      <Ticks>{xs.map(n => <span key={n}>{tickText(n, -1)}</span>)}</Ticks>
      <Trace $c="#f00">Ic(VT2) (A)</Trace>
      <AxisName>Vce(VT2) (V)</AxisName>
    </XAxis>
  </ChartArea>
);

const AnalysisWindow = () => (
  <Frame $active>
    <TitleBar $active>
      <svg width="16" height="16" shapeRendering="crispEdges">
        <rect width="16" height="16" />
        <rect x="1" y="1" width="14" height="3" fill="#0000c0" />
        <rect x="1" y="5" width="14" height="10" fill="#fff" />
        <rect x="4" y="7" width="10" height="7" />
        <rect x="5" y="8" width="8" height="5" fill="#20e8e8" />
        <path d="M5 12l3-3h2l3 3" stroke="#000" fill="none" />
      </svg>
      <Title $active>DC Analysis</Title>
      <WindowControls active />
    </TitleBar>
    <Client $wide>
      <Toolbar $wide>
        <ToolStrip items="arrow shapes v *scaleMode cursorMode hTag vTag tag fnTag text | props | run stop pause | points tokens | ruler plusGrid | *vLines *hLines *minorV minorH | baseline tracker | toX toY toPerf branch | animate | *nextPt nextInt peak valley high low inflect gHigh gLow bottoms tops" />
        <Rule />
        <ToolStrip items="chest v | table | watchP | *scaleX *scaleY | zoomIn zoomOut zoomFit | globe font" />
      </Toolbar>
      <Charts />
      <TabBar $wide>
        {["list", "first", "prev", "next", "last"].map(k => <NavArrow key={k} kind={k} />)}
        <Slant><path d="M0 0h8v16h-2z" fill="#fff" /><path d="M1 0l6 16" stroke="#000" fill="none" /></Slant>
        <Tab type="button" $current>Main</Tab>
        <Slant><path d="M0 0h8l-6 16h-2z" fill="#fff" /><path d="M8 .5h-1L1 16" stroke="#000" fill="none" /></Slant>
        <TabLine />
        <Gripper />
      </TabBar>
    </Client>
  </Frame>
);

const App = () => {
  return (
    <>
      <GlobalStyle />
      <Desktop>
        <SchematicWindow />
        <AnalysisWindow />
      </Desktop>
    </>
  )
}
export default App;
